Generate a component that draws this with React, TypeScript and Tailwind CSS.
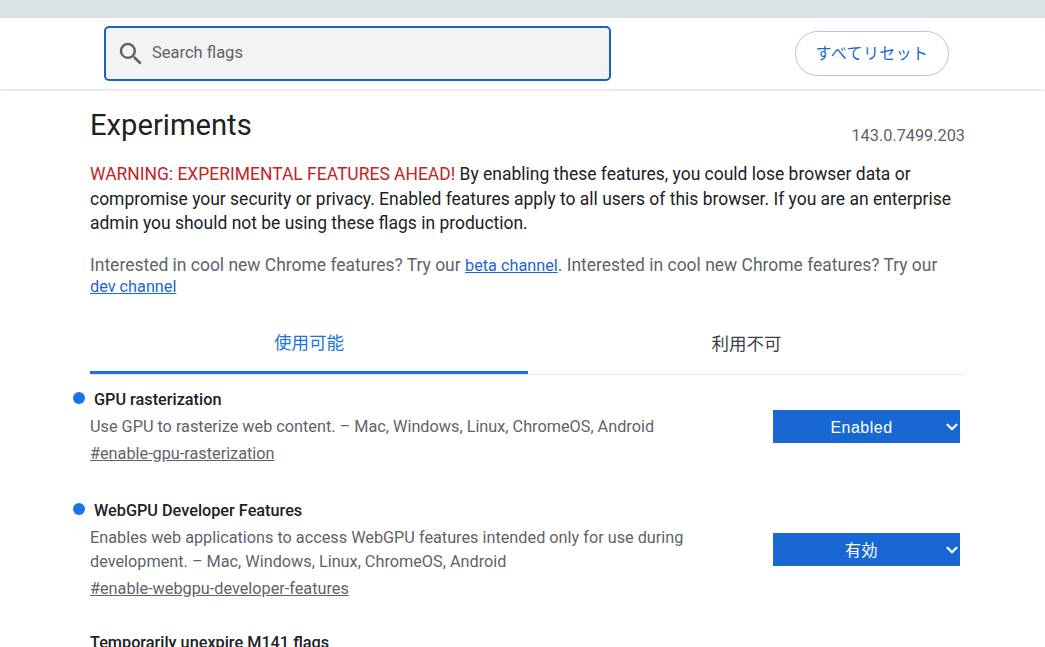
import { ChevronDown } from "lucide-react";

const font = "font-['Roboto','Noto_Sans_CJK_JP',sans-serif]";

function FlagRow({
    title,
    description,
    anchor,
    value,
    rowClass,
}: {
    title: string;
    description: React.ReactNode;
    anchor: string;
    value: string;
    rowClass: string;
}) {
    return (
        <div className={`relative flex items-center justify-between ${rowClass}`}>
            <div className="w-[620px]">
                <div className="relative pl-1 text-[16.25px] leading-[22px] font-medium text-[#202124]">
                    <span className="absolute left-[-17px] top-[3px] h-3 w-3 rounded-full bg-[#1a73e8]" />
                    {title}
                </div>
                <p className="mt-[4px] text-[16.25px] leading-[24px] text-[#5f6368]">{description}</p>
                <a className="mt-[3px] block text-[16.25px] leading-[24px] text-[#5f6368] underline">{anchor}</a>
            </div>
            <div className="relative mr-[5px] mb-[1px] flex h-[33px] w-[187px] items-center justify-center bg-[#1967d2] pr-[10px] pt-[2px] font-['Liberation_Sans','Noto_Sans_CJK_JP',sans-serif] text-[16px] tracking-[0.5px] text-white">
                {value}
                <ChevronDown className="absolute right-[-1px] top-[8px] h-[18px] w-[18px]" strokeWidth={3} />
            </div>
        </div>
    );
}

export default function App() {
    return (
        <div className={`h-[647px] overflow-hidden bg-white ${font}`}>
            <div className="h-[18px] bg-[#dce3e7]" />
            <header className="flex h-[71px] items-center justify-between bg-white pl-[104px] pr-[96px] shadow-[0_1px_3px_rgba(60,64,67,0.2)]">
                <div className="flex h-[55px] w-[507px] items-center rounded-[5px] border-[2.5px] border-[#1a5fc4] bg-[#f1f3f4] pl-[10px]">
                    <svg viewBox="0 0 24 24" className="h-[30px] w-[30px] fill-[#5f6368]">
                        <path d="M15.5 14h-.79l-.28-.27A6.471 6.471 0 0 0 16 9.5 6.5 6.5 0 1 0 9.5 16c1.61 0 3.09-.59 4.23-1.57l.27.28v.79l5 4.99L20.49 19l-4.99-5zm-6 0C7.01 14 5 11.99 5 9.5S7.01 5 9.5 5 14 7.01 14 9.5 11.99 14 9.5 14z" />
                    </svg>
                    <span className="ml-[6px] mb-[1px] text-[16.5px] text-[#5f6368]">Search flags</span>
                </div>
                <button className="h-[45px] w-[154px] rounded-full border border-[#a8c7f0] text-[16px] tracking-[0.4px] text-[#1967d2]">
                    すべてリセット
                </button>
            </header>

            <main className="w-[875px] ml-[90px]">
                <div className="flex items-start justify-between">
                    <h1 className="mt-[18px] text-[29.2px] leading-[37px] text-[#202124]">Experiments</h1>
                    <span className="mt-[37px] text-[16.3px] leading-[20px] text-[#5f6368]">143.0.7499.203</span>
                </div>
                <p className="mt-[16px] text-[17.48px] leading-[24.6px] text-[#202124]">
                    <span className="text-[#c5221f]">WARNING: EXPERIMENTAL FEATURES AHEAD!</span> By enabling these features, you could lose browser data or compromise your security or privacy. Enabled features apply to all users of this browser. If you are an enterprise admin you should not be using these flags in production.
                </p>
                <p className="mt-[19px] text-[17.48px] leading-[20px] text-[#5f6368]">
                    Interested in cool new Chrome features? Try our <a className="text-[16.25px] text-[#1967d2] underline">beta channel</a>. Interested in cool new Chrome features? Try our <a className="text-[16.25px] text-[#1967d2] underline">dev channel</a>
                </p>

                <div className="mt-[16px] flex h-[62px] border-b border-[#e8eaed] pt-[2px] text-[17.5px]">
                    <div className="mt-[-2px] flex w-[438px] items-center justify-center border-b-[3px] border-[#1a73e8] pt-[3px] text-[#1a73e8]">使用可能</div>
                    <div className="flex flex-1 items-center justify-center text-[#3c4043]">利用不可</div>
                </div>

                <FlagRow
                    title="GPU rasterization"
                    description="Use GPU to rasterize web content. – Mac, Windows, Linux, ChromeOS, Android"
                    anchor="#enable-gpu-rasterization"
                    value="Enabled"
                    rowClass="mt-[14px]"
                />
                <FlagRow
                    title="WebGPU Developer Features"
                    description="Enables web applications to access WebGPU features intended only for use during development. – Mac, Windows, Linux, ChromeOS, Android"
                    anchor="#enable-webgpu-developer-features"
                    value="有効"
                    rowClass="mt-[34px]"
                />
                <div className="mt-[31px] text-[16.25px] leading-[22px] font-medium text-[#202124]">Temporarily unexpire M141 flags</div>
            </main>
        </div>
    );
}
